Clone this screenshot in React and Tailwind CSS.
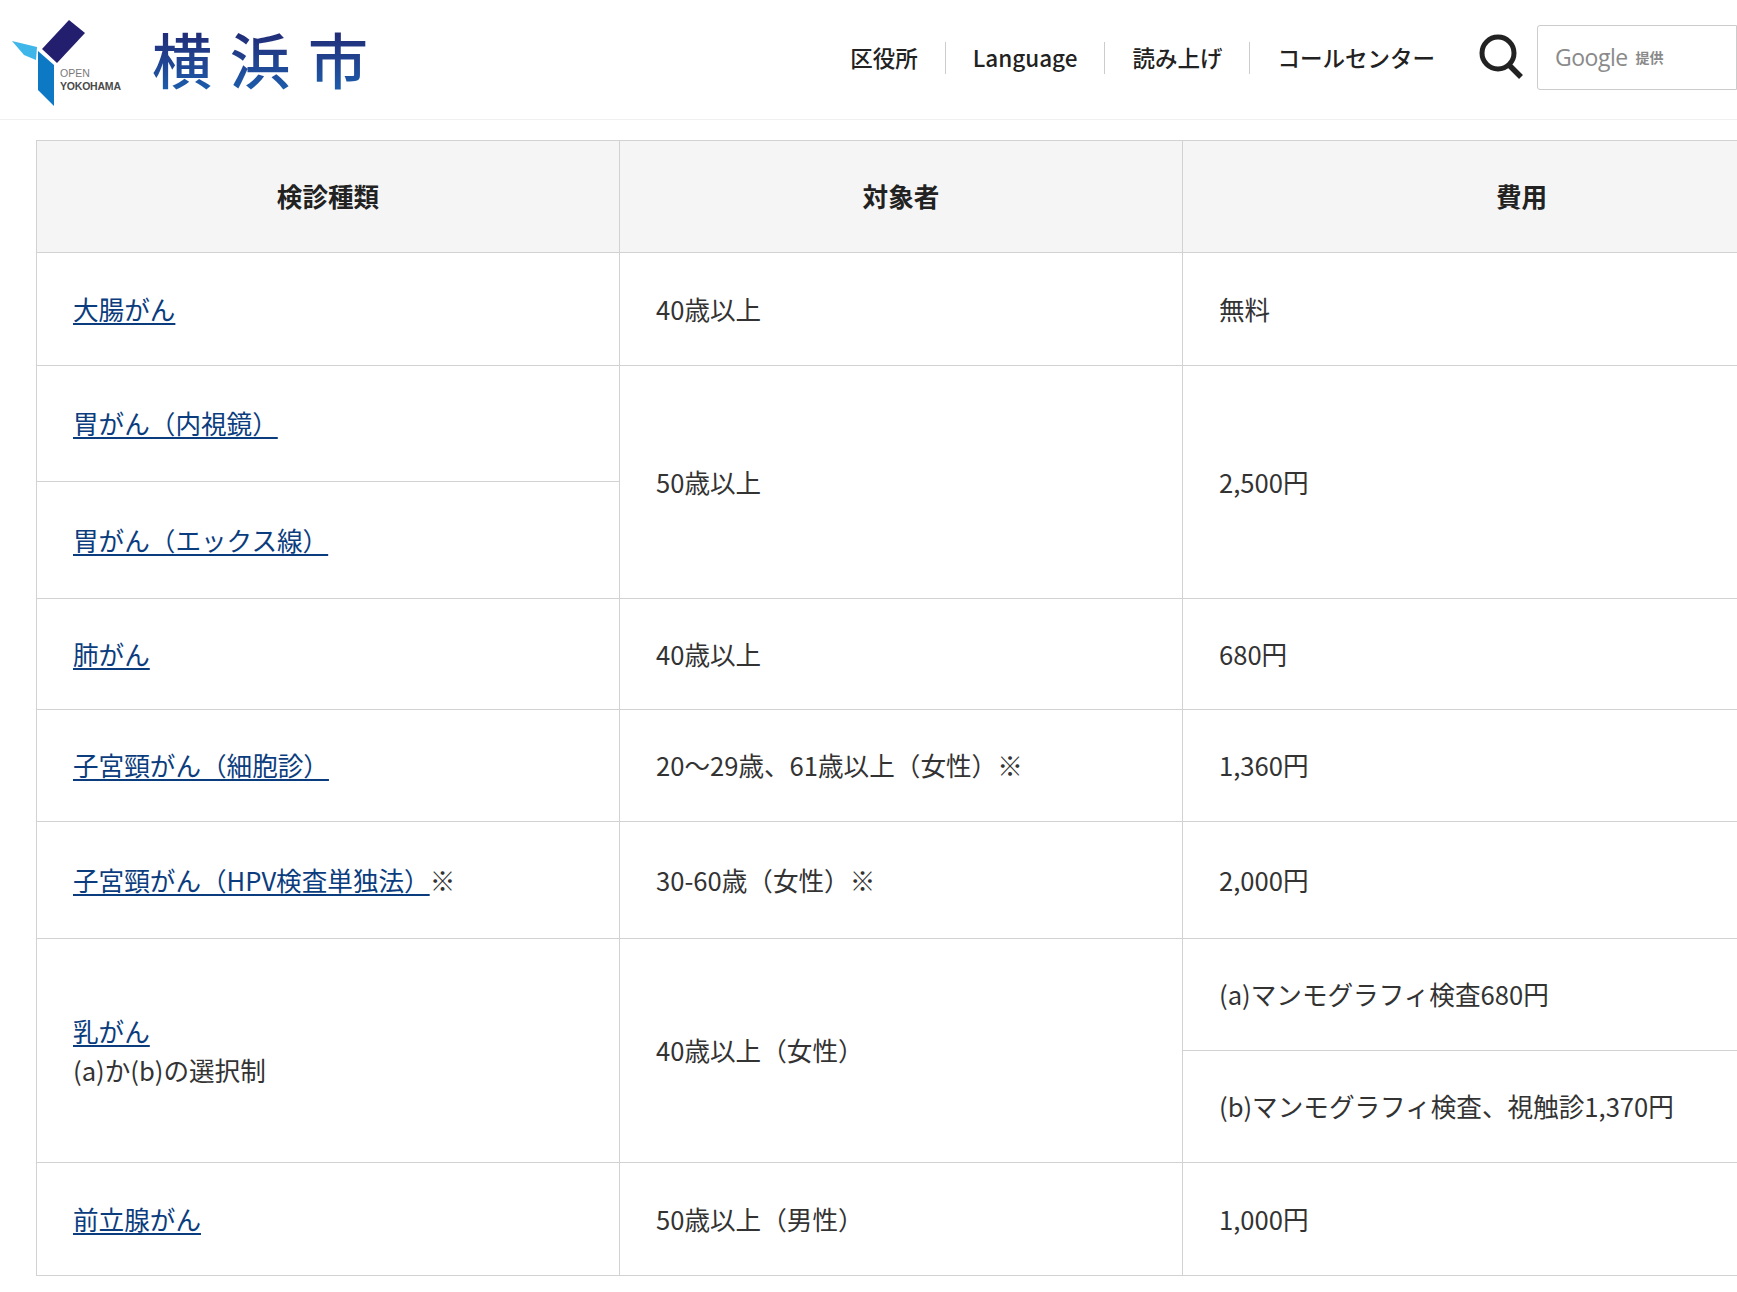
const cellBase = "border border-[#d2d2d2] px-9 text-left align-middle font-normal";

function Doc({ children }) {
  return <a href="#" className="text-[#0b3d7e] underline decoration-[2px] underline-offset-[3px]">{children}</a>;
}

function Logo() {
  return (
    <div className="flex items-center">
      <svg width="125" height="100" viewBox="0 0 125 100" className="shrink-0">
        <polygon points="69,12 85,25 57,55 42,41" fill="#241e6e" />
        <polygon points="12,33 37,39 36,52 24,47" fill="#3fb6ea" />
        <polygon points="38,43 54,57 54,98 38,82" fill="#0d78c4" />
        <text x="60" y="69" fontFamily="'Liberation Sans', sans-serif" fontSize="10.5" fill="#7a7a7a">OPEN</text>
        <text x="60" y="82" fontFamily="'Liberation Sans', sans-serif" fontSize="10.5" fontWeight="700" fill="#4a4a4a" textLength="61">YOKOHAMA</text>
      </svg>
      <div className="ml-[27px] bg-gradient-to-b from-[#20246f] to-[#1a5fae] bg-clip-text text-[60px] leading-[70px] font-medium tracking-[18px] text-transparent">横浜市</div>
    </div>
  );
}

function Header() {
  const items = ["区役所", "Language", "読み上げ", "コールセンター"];
  return (
    <header className="flex h-[120px] items-center justify-between border-b border-[#f0f0f0] pb-1">
      <Logo />
      <div className="flex shrink-0 items-center">
        <nav className="flex items-center">
          {items.map((item, i) => (
            <span key={item} className={"flex h-[32px] items-center px-[27px] text-[22.5px] font-medium text-[#222] " + (i < 3 ? "border-r border-[#ccc]" : "")}>{item}</span>
          ))}
        </nav>
        <svg width="46" height="46" viewBox="0 0 46 46" fill="none" stroke="#222" strokeWidth="5" className="ml-4 mb-1 shrink-0">
          <circle cx="20" cy="20" r="16" />
          <path d="M31 32 L43 44" strokeWidth="5.5" />
        </svg>
        <div className="ml-[13px] flex h-[65px] w-[200px] items-center rounded-l-[3px] border border-[#ccc] pl-[17px] text-[#8a8a8a]">
          <span className="font-['Open_Sans',sans-serif] text-[23px] tracking-[-0.5px]">Google</span>
          <span className="ml-2 text-[14px] font-bold">提供</span>
        </div>
      </div>
    </header>
  );
}

export default function App() {
  return (
    <div className="h-screen w-full overflow-hidden bg-white font-['Noto_Sans_CJK_JP','Noto_Sans',sans-serif] text-[25.6px] text-[#333]">
      <Header />
      <div className="ml-9 mt-5 w-[1824px]">
        <table className="w-full table-fixed border-collapse">
          <colgroup>
            <col className="w-[583px]" />
            <col className="w-[563px]" />
            <col className="w-[678px]" />
          </colgroup>
          <thead>
            <tr className="h-[112px] bg-[#f5f5f5] font-bold text-[#222]">
              <th className="border border-[#d2d2d2] text-center font-bold">検診種類</th>
              <th className="border border-[#d2d2d2] text-center font-bold">対象者</th>
              <th className="border border-[#d2d2d2] text-center font-bold">費用</th>
            </tr>
          </thead>
          <tbody>
            <tr className="h-[113px]">
              <td className={cellBase}><Doc>大腸がん</Doc></td>
              <td className={cellBase}>40歳以上</td>
              <td className={cellBase}>無料</td>
            </tr>
            <tr className="h-[116px]">
              <td className={cellBase}><Doc>胃がん（内視鏡）</Doc></td>
              <td className={cellBase} rowSpan={2}>50歳以上</td>
              <td className={cellBase} rowSpan={2}>2,500円</td>
            </tr>
            <tr className="h-[117px]">
              <td className={cellBase}><Doc>胃がん（エックス線）</Doc></td>
            </tr>
            <tr className="h-[111px]">
              <td className={cellBase}><Doc>肺がん</Doc></td>
              <td className={cellBase}>40歳以上</td>
              <td className={cellBase}>680円</td>
            </tr>
            <tr className="h-[112px]">
              <td className={cellBase}><Doc>子宮頸がん（細胞診）</Doc></td>
              <td className={cellBase}>20～29歳、61歳以上（女性）※</td>
              <td className={cellBase}>1,360円</td>
            </tr>
            <tr className="h-[117px]">
              <td className={cellBase}><Doc>子宮頸がん（HPV検査単独法）</Doc>※</td>
              <td className={cellBase}>30-60歳（女性）※</td>
              <td className={cellBase}>2,000円</td>
            </tr>
            <tr className="h-[112px]">
              <td className={cellBase} rowSpan={2}>
                <Doc>乳がん</Doc>
                <br />
                (a)か(b)の選択制
              </td>
              <td className={cellBase} rowSpan={2}>40歳以上（女性）</td>
              <td className={cellBase}>(a)マンモグラフィ検査680円</td>
            </tr>
            <tr className="h-[112px]">
              <td className={cellBase}>(b)マンモグラフィ検査、視触診1,370円</td>
            </tr>
            <tr className="h-[113px]">
              <td className={cellBase}><Doc>前立腺がん</Doc></td>
              <td className={cellBase}>50歳以上（男性）</td>
              <td className={cellBase}>1,000円</td>
            </tr>
          </tbody>
        </table>
      </div>
    </div>
  );
}
